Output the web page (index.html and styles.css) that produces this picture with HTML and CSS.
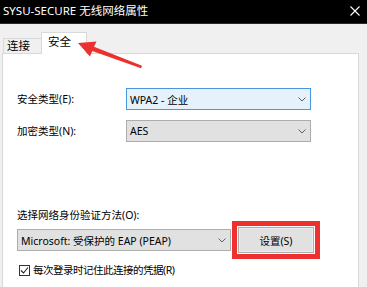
FILE: index.html
```html
<!DOCTYPE html>
<html lang="zh-CN">
<head>
    <meta charset="UTF-8">
    <meta name="viewport" content="width=device-width, initial-scale=1.0">
    <title>SYSU-SECURE 无线网络属性</title>
    <link rel="stylesheet" href="styles.css">
</head>
<body>
    <div class="window">
        <div class="titlebar">
            <span class="title">SYSU-SECURE 无线网络属性</span>
            <svg class="close" width="10" height="10" viewBox="0 0 10 10">
                <path d="M0.5 0.5 L9.5 9.5 M9.5 0.5 L0.5 9.5" stroke="#fff" stroke-width="1.1" fill="none"/>
            </svg>
        </div>

        <div class="tabs">
            <div class="tab">连接</div>
            <div class="tab active">安全</div>
        </div>

        <div class="panel">
            <div class="form-grid">
                <label class="label">安全类型(E):</label>
                <div class="select focused">
                    <span>WPA2 - 企业</span>
                    <svg width="8" height="5" viewBox="0 0 8 5"><path d="M0.5 0.5 L4 4 L7.5 0.5" stroke="#606060" fill="none"/></svg>
                </div>
                <label class="label">加密类型(N):</label>
                <div class="select">
                    <span>AES</span>
                    <svg width="8" height="5" viewBox="0 0 8 5"><path d="M0.5 0.5 L4 4 L7.5 0.5" stroke="#606060" fill="none"/></svg>
                </div>
            </div>

            <div class="label method-label">选择网络身份验证方法(O):</div>
            <div class="method-row">
                <div class="select wide">
                    <span>Microsoft: 受保护的 EAP (PEAP)</span>
                    <svg width="8" height="5" viewBox="0 0 8 5"><path d="M0.5 0.5 L4 4 L7.5 0.5" stroke="#606060" fill="none"/></svg>
                </div>
                <button class="settings">设置(S)</button>
            </div>

            <div class="check-row">
                <span class="checkbox">
                    <svg width="9" height="9" viewBox="0 0 9 9"><path d="M1 4.5 L3.5 7 L8 1.5" stroke="#222" stroke-width="1.1" fill="none"/></svg>
                </span>
                <span class="label check-label">每次登录时记住此连接的凭据(R)</span>
            </div>
        </div>

        <!-- annotation arrow pointing at the tab -->
        <svg class="arrow" width="367" height="287" viewBox="0 0 367 287">
            <polygon points="78,43 96.5,41.5 94,46.8 142,65.8 141,68.2 92.3,51 90,56.5" fill="#ec2f2f"/>
        </svg>
    </div>
</body>
</html>
```

FILE: styles.css
```css
* {
    box-sizing: border-box;
}
html, body {
    margin: 0;
    padding: 0;
}
body {
    font-family: "Noto Sans", "Noto Sans CJK SC", sans-serif;
    font-size: 10.5px;
    color: #000;
    background-color: #f0f0f0;
}
.window {
    position: relative;
    width: 367px;
    height: 287px;
    display: flex;
    flex-direction: column;
    overflow: hidden;
}
.titlebar {
    height: 24px;
    background-color: #000;
    border-bottom: 1px solid #2b2b2b;
    display: flex;
    align-items: center;
    justify-content: space-between;
    padding: 0 7px 1px 3px;
}
.title {
    color: #fff;
    font-size: 11.5px;
    line-height: 14px;
}
.close {
    display: block;
}
.tabs {
    height: 29px;
    display: flex;
    align-items: flex-end;
    padding-left: 3px;
    font-size: 11.5px;
}
.tab {
    height: 15px;
    width: 39px;
    border: 1px solid #d9d9d9;
    border-bottom: none;
    background-color: #f0f0f0;
    line-height: 13px;
    padding-left: 3px;
}
.tab.active {
    height: 22px;
    width: 46px;
    margin-left: -1px;
    margin-bottom: -1px;
    background-color: #fff;
    line-height: 18px;
    padding-left: 6px;
    position: relative;
    z-index: 1;
}
.panel {
    flex: 1;
    margin: 0 8px 0 2px;
    background-color: #fff;
    border: 1px solid #d9d9d9;
    border-bottom: none;
    padding: 34px 14px 0 14px;
}
.label {
    line-height: 13px;
    color: #000;
}
.form-grid {
    display: grid;
    grid-template-columns: 109px 185px;
    row-gap: 10px;
    align-items: center;
}
.select {
    height: 22px;
    border: 1px solid #adadad;
    background-color: #e1e1e1;
    display: flex;
    align-items: center;
    justify-content: space-between;
    padding: 0 4px 0 3px;
}
.select.focused {
    border-color: #4a95e0;
    background-color: #e5f1fb;
}
.select.wide {
    width: 214px;
}
.method-label {
    margin-top: 67px;
}
.method-row {
    display: flex;
    align-items: center;
    gap: 7px;
    margin-top: 5px;
    height: 26px;
}
.settings {
    width: 76px;
    height: 26px;
    font-family: inherit;
    font-size: 10.5px;
    background-color: #e1e1e1;
    border: 1px solid #adadad;
    box-shadow: inset 0 0 0 1px #ececec;
    outline: 5px solid #ef3030;
    outline-offset: 1px;
    padding: 0;
}
.check-row {
    display: flex;
    align-items: center;
    gap: 3px;
    margin-top: 11px;
    padding-left: 2px;
}
.check-label {
    letter-spacing: -0.5px;
}
.checkbox {
    width: 11px;
    height: 11px;
    border: 1px solid #333;
    display: flex;
    align-items: center;
    justify-content: center;
}
.arrow {
    position: absolute;
    left: 0;
    top: 0;
    pointer-events: none;
    z-index: 2;
}
```
